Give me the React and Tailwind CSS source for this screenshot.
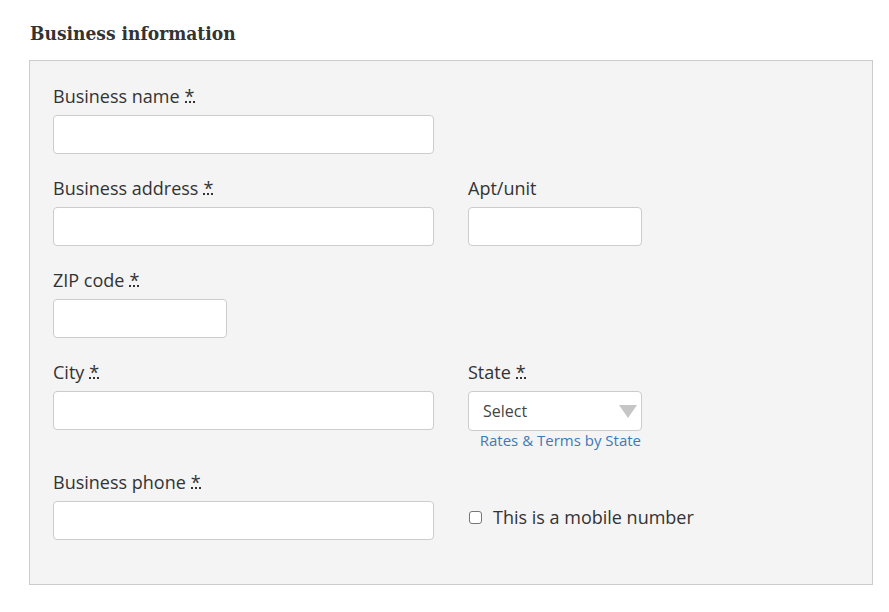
export default function App() {
  const Req = () => (
    <abbr className="no-underline border-b-2 border-dotted border-[#333] leading-[10px] ml-[5px] inline-block" title="required">*</abbr>
  );
  const Label = ({ children, req }) => (
    <div className="h-[24px] leading-[24px] text-[18px] text-[#333] mb-[7px] whitespace-nowrap">
      {children}
      {req && <Req />}
    </div>
  );
  const Input = ({ w = "w-[381px]" }) => (
    <div className={`${w} h-[39px] bg-white border border-[#ccc] rounded-[4px]`} />
  );
  return (
    <div className="w-[889px] h-[612px] bg-white" style={{ fontFamily: '"Open Sans", sans-serif' }}>
      <div className="pt-[20px] pl-[29px] pr-[17px]">
        <h2 className="text-[19px] leading-[26px] font-bold text-[#333] mb-[14px] ml-[1px] font-stretch-condensed" style={{ fontFamily: '"DejaVu Serif Condensed", "DejaVu Serif", serif' }}>
          Business information
        </h2>
        <div className="bg-[#f4f4f4] border border-[#ccc] w-[844px] pt-[23px] pl-[23px] pb-[44px]">
          <div className="flex flex-col gap-[22px]">
            <div>
              <Label req>Business name</Label>
              <Input />
            </div>
            <div className="flex gap-[34px]">
              <div>
                <Label req>Business address</Label>
                <Input />
              </div>
              <div>
                <Label>Apt/unit</Label>
                <Input w="w-[174px]" />
              </div>
            </div>
            <div>
              <Label req>ZIP code</Label>
              <Input w="w-[174px]" />
            </div>
            <div className="flex gap-[34px]">
              <div>
                <Label req>City</Label>
                <Input />
              </div>
              <div>
                <Label req>State</Label>
                <div className="w-[174px] h-[40px] bg-white border border-[#ccc] rounded-[4px] flex items-center justify-between pl-[14px] pr-[4px]">
                  <span className="text-[16px] text-[#444]">Select</span>
                  <svg width="18" height="13" viewBox="0 0 18 13">
                    <polygon points="0,0 18,0 9,13" fill="#c6c6c6" />
                  </svg>
                </div>
                <div className="text-[15px] leading-[19px] text-[#3d7ab8] text-right pr-[1px] whitespace-nowrap">Rates &amp; Terms by State</div>
              </div>
            </div>
            <div className="flex gap-[34px] -mt-[2px]">
              <div>
                <Label req>Business phone</Label>
                <Input />
              </div>
              <div className="flex items-center gap-[11px] pt-[24px]">
                <div className="w-[13px] h-[13px] border border-[#767676] rounded-[3px] bg-white ml-[1px]" />
                <span className="text-[18px] text-[#333]">This is a mobile number</span>
              </div>
            </div>
          </div>
        </div>
      </div>
    </div>
  );
}
